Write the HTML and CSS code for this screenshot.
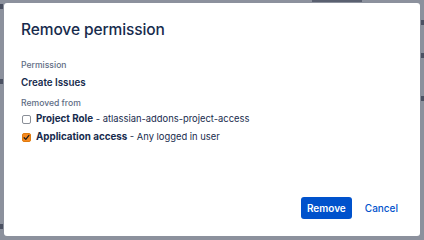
FILE: index.html
```html
<!DOCTYPE html>
<html lang="en">
<head>
    <meta charset="UTF-8">
    <meta name="viewport" content="width=device-width, initial-scale=1.0">
    <title>Remove permission</title>
    <link rel="stylesheet" href="styles.css">
</head>
<body>
    <div class="backdrop">
        <!-- bits of the page behind the overlay -->
        <span class="mark m1"></span>
        <span class="mark m2"></span>
        <span class="mark m3"></span>
        <span class="mark m4"></span>
        <span class="mark m5"></span>
        <span class="mark m6"></span>
        <span class="mark m7"></span>
        <div class="dialog">
            <h1>Remove permission</h1>
            <div class="label">Permission</div>
            <div class="value">Create Issues</div>
            <div class="label">Removed from</div>
            <label class="check">
                <span class="box"></span>
                <span><b>Project Role</b> - atlassian-addons-project-access</span>
            </label>
            <label class="check">
                <span class="box checked">
                    <svg width="7" height="7" viewBox="0 0 8 8"><path d="M1.3 4.3 L3.2 6.2 L6.8 1.6" fill="none" stroke="#1d1d1d" stroke-width="1.4" stroke-linecap="round" stroke-linejoin="round"/></svg>
                </span>
                <span><b>Application access</b> - Any logged in user</span>
            </label>
            <div class="footer">
                <button class="btn-primary">Remove</button>
                <button class="btn-link">Cancel</button>
            </div>
        </div>
    </div>
</body>
</html>
```

FILE: styles.css
```css
body {
    margin: 0;
    padding: 0;
    font-family: Inter, "Liberation Sans", Arial, sans-serif;
    color: #172b4d;
}
.backdrop {
    position: relative;
    width: 424px;
    height: 240px;
    background-color: #8c919d;
    padding: 3px 4px 4px 4px;
    box-sizing: border-box;
    overflow: hidden;
}
.mark {
    position: absolute;
    background-color: #4b5162;
    width: 3px;
    height: 5px;
}
.m1 { left: 0; top: 4px; }
.m2 { left: 0; top: 79px; }
.m3 { left: 0; top: 224px; }
.m4 { left: 421px; top: 20px; }
.m5 { left: 421px; top: 53px; }
.m6 { left: 421px; top: 96px; }
.m7 { left: 312px; top: 0; width: 50px; height: 2px; background-color: #5a6070; }
.dialog {
    position: relative;
    height: 233px;
    background-color: #fff;
    border-radius: 3px;
    padding: 14px 17px 17px 17px;
    box-sizing: border-box;
    display: flex;
    flex-direction: column;
}
h1 {
    margin: 0 0 16px 0;
    font-size: 15.5px;
    font-weight: 500;
    line-height: 26px;
    letter-spacing: -0.1px;
}
.label {
    font-size: 8.6px;
    color: #5e6c84;
    line-height: 12px;
    margin-bottom: 4px;
    font-weight: 500;
}
.value {
    font-size: 9.8px;
    font-weight: 600;
    line-height: 16px;
    margin-bottom: 6px;
}
.label + .check {
    margin-top: -3px;
}
.check {
    display: flex;
    align-items: center;
    gap: 5px;
    font-size: 9.4px;
    line-height: 18px;
    color: #172b4d;
}
.check b {
    font-weight: 700;
    font-size: 9.8px;
}
.box {
    width: 7px;
    height: 7px;
    border: 1px solid #8a8f98;
    border-radius: 2px;
    background: #fff;
    display: flex;
    align-items: center;
    justify-content: center;
    flex-shrink: 0;
    margin-left: 1px;
}
.box.checked {
    background: #f5891f;
    border-color: #e07c10;
}
.footer {
    margin-top: auto;
    display: flex;
    justify-content: flex-end;
    align-items: center;
    gap: 8px;
}
button {
    font-family: inherit;
    font-size: 10px;
    font-weight: 600;
    border: none;
    border-radius: 3px;
    cursor: pointer;
    height: 22px;
    padding: 0 5px;
}
.btn-primary {
    background-color: #0052cc;
    color: #fff;
    padding: 0 6px;
}
.btn-link {
    background: none;
    color: #0052cc;
    font-weight: 500;
}
```
